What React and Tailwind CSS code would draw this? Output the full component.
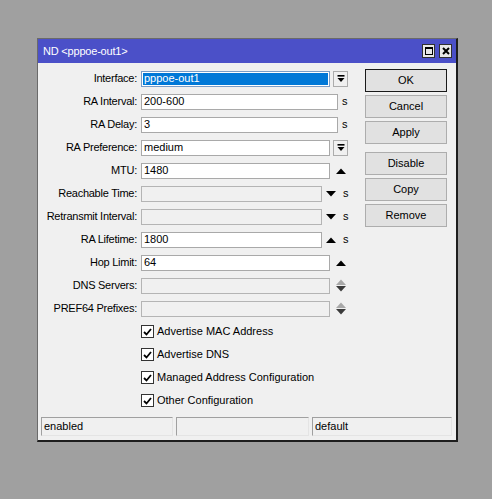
import React from 'react'

const font = { fontFamily: '"Liberation Sans", Arial, sans-serif' }

const DropIcon = () => (
  <svg width="8" height="8" viewBox="0 0 8 8">
    <rect x="0.5" y="0" width="7" height="1.6" fill="#000" />
    <polygon points="0.5,3 7.5,3 4,7" fill="#000" />
  </svg>
)

const Up = ({ color = '#000' }) => (
  <svg width="10" height="6" viewBox="0 0 10 6">
    <polygon points="0,6 10,6 5,0.5" fill={color} />
  </svg>
)

const Down = ({ color = '#000' }) => (
  <svg width="10" height="6" viewBox="0 0 10 6">
    <polygon points="0,0 10,0 5,5.5" fill={color} />
  </svg>
)

const Spin = () => (
  <div className="flex flex-col items-center gap-[1px]">
    <Up color="#a8a8a8" />
    <Down color="#3a3a3a" />
  </div>
)

const DropBtn = () => (
  <div className="ml-[3px] flex h-[16px] w-[15px] items-center justify-center border border-[#acacac] bg-[#f0f0f0]">
    <DropIcon />
  </div>
)

const Field = ({ w, value, disabled, selected }) => (
  <div
    className={
      'flex h-[16px] items-center border ' +
      (disabled ? 'border-[#b4b4b4] bg-[#f0f0f0]' : selected ? 'border-[#7a9cc6] bg-white p-[1px]' : 'border-[#a9a9a9] bg-white')
    }
    style={{ width: w }}
  >
    {selected ? (
      <div className="flex h-full w-full items-center bg-[#0078d7] pl-[1px] text-white">{value}</div>
    ) : (
      <span className="pl-[2px]">{value}</span>
    )}
  </div>
)

const Sec = ({ ml = 'ml-[7px]' }) => <span className={ml + ' leading-none'}>s</span>

const Row = ({ label, children }) => (
  <div className="flex h-[23px] items-center">
    <div className="w-[100px] pr-[1px] text-right tracking-[-0.25px]">{label}</div>
    <div className="ml-[3px] flex items-center">{children}</div>
  </div>
)

const Check = ({ label }) => (
  <div className="flex h-[23px] items-center pl-[103px]">
    <div className="flex h-[13px] w-[13px] items-center justify-center border border-[#333] bg-white">
      <svg width="9" height="8" viewBox="0 0 9 8">
        <path d="M1 4 L3.5 6.5 L8 1" stroke="#000" strokeWidth="1.8" fill="none" />
      </svg>
    </div>
    <span className="ml-[3px]">{label}</span>
  </div>
)

const Btn = ({ children, primary, className = '' }) => (
  <div
    className={
      'flex h-[23px] w-[82px] items-center justify-center border ' +
      (primary ? 'border-[#1a1a1a] bg-[#e1e1e1]' : 'border-[#adadad] bg-[#e1e1e1]') +
      ' ' +
      className
    }
  >
    {children}
  </div>
)

export default function App() {
  return (
    <div className="h-[499px] w-[492px] bg-[#a0a0a0] pl-[37px] pt-[38px] text-[11px] text-black" style={font}>
      <div className="flex h-[404px] w-[421px] flex-col border-l border-t border-[#6a6a6a] border-b-2 border-r-2 border-b-[#1e1e1e] border-r-[#1e1e1e] bg-[#f0f0f0]">
        {/* title bar */}
        <div className="flex h-[24px] items-center justify-between bg-[#4b50c8] pl-[5px] pr-[4px] text-[11px] tracking-[-0.2px] text-white">
          <span>ND &lt;pppoe-out1&gt;</span>
          <div className="flex gap-[4px]">
            <div className="flex h-[14px] w-[13px] items-center justify-center border border-[#303030] bg-[#e8e8e8]">
              <div className="h-[8px] w-[8px] border border-t-2 border-black" />
            </div>
            <div className="flex h-[14px] w-[13px] items-center justify-center border border-[#303030] bg-[#e8e8e8]">
              <svg width="8" height="8" viewBox="0 0 8 8">
                <path d="M1 1 L7 7 M7 1 L1 7" stroke="#000" strokeWidth="2" />
              </svg>
            </div>
          </div>
        </div>

        <div className="flex flex-1 flex-col">
          <div className="flex">
            {/* form */}
            <div className="w-[316px] pt-[4px]">
              <Row label="Interface:">
                <Field w={189} value="pppoe-out1" selected />
                <DropBtn />
              </Row>
              <Row label="RA Interval:">
                <Field w={197} value="200-600" />
                <Sec ml="ml-[4px]" />
              </Row>
              <Row label="RA Delay:">
                <Field w={197} value="3" />
                <Sec ml="ml-[4px]" />
              </Row>
              <Row label="RA Preference:">
                <Field w={189} value="medium" />
                <DropBtn />
              </Row>
              <Row label="MTU:">
                <Field w={189} value="1480" />
                <span className="ml-[6px]"><Up /></span>
              </Row>
              <Row label="Reachable Time:">
                <Field w={181} disabled />
                <span className="ml-[4px]"><Down /></span>
                <Sec />
              </Row>
              <Row label="Retransmit Interval:">
                <Field w={181} disabled />
                <span className="ml-[4px]"><Down /></span>
                <Sec />
              </Row>
              <Row label="RA Lifetime:">
                <Field w={181} value="1800" />
                <span className="ml-[4px]"><Up /></span>
                <Sec />
              </Row>
              <Row label="Hop Limit:">
                <Field w={189} value="64" />
                <span className="ml-[6px]"><Up /></span>
              </Row>
              <Row label="DNS Servers:">
                <Field w={189} disabled />
                <span className="ml-[6px]"><Spin /></span>
              </Row>
              <Row label="PREF64 Prefixes:">
                <Field w={189} disabled />
                <span className="ml-[6px]"><Spin /></span>
              </Row>

              <Check label="Advertise MAC Address" />
              <Check label="Advertise DNS" />
              <Check label="Managed Address Configuration" />
              <Check label="Other Configuration" />
            </div>

            {/* buttons */}
            <div className="ml-[11px] flex flex-col gap-[3px] pt-[6px]">
              <Btn primary>OK</Btn>
              <Btn>Cancel</Btn>
              <Btn>Apply</Btn>
              <Btn className="mt-[5px]">Disable</Btn>
              <Btn>Copy</Btn>
              <Btn>Remove</Btn>
            </div>
          </div>

          {/* status bar */}
          <div className="mb-[4px] ml-[3px] mr-[4px] mt-auto flex h-[19px] gap-[3px]">
            <div className="flex w-[132px] items-center border border-b-[#e4e4e4] border-l-[#a0a0a0] border-r-[#e4e4e4] border-t-[#a0a0a0] pl-[2px]">enabled</div>
            <div className="w-[133px] border border-b-[#e4e4e4] border-l-[#a0a0a0] border-r-[#e4e4e4] border-t-[#a0a0a0]" />
            <div className="flex flex-1 items-center border border-b-[#e4e4e4] border-l-[#a0a0a0] border-r-[#e4e4e4] border-t-[#a0a0a0] pl-[2px]">default</div>
          </div>
        </div>
      </div>
    </div>
  )
}
